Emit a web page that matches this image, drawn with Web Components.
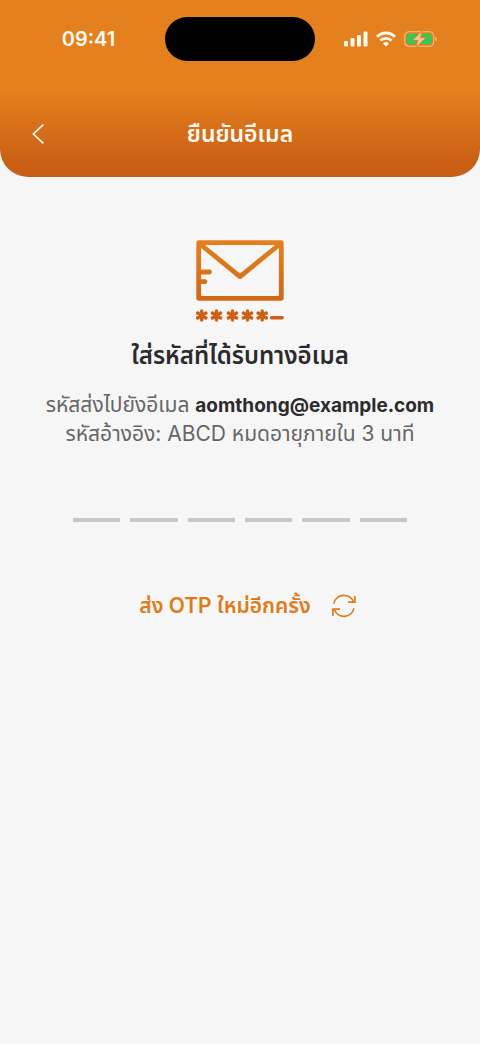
<!DOCTYPE html>
<html lang="th">
<head>
<meta charset="utf-8">
<meta name="viewport" content="width=device-width, initial-scale=1">
<title>ยืนยันอีเมล</title>
<style>
  html, body { margin: 0; min-height: 100%; background: #f6f6f6; }
  body { font-family: Inter, "Noto Sans Thai", "Noto Sans", sans-serif; color: #2b2b2d; }
</style>
</head>
<body>
<verify-page></verify-page>
<script>
const define = (name, html, setup) => {
  const template = document.createElement('template');
  template.innerHTML = html;
  customElements.define(name, class extends HTMLElement {
    constructor() {
      super();
      this.attachShadow({ mode: 'open' }).append(template.content.cloneNode(true));
      if (setup) setup(this.shadowRoot);
    }
  });
};

define('status-bar', `
<style>
  :host { display: grid; grid-template-columns: 1fr 150px 1fr; align-items: center; height: 44px; padding-top: 17px; color: #fffaf0; }
  time { font-size: 20px; font-weight: 600; line-height: 24px; justify-self: center; padding-left: 12px; }
  .island { height: 44px; border-radius: 22px; background: #000; }
  .icons { display: flex; gap: 8px; align-items: center; justify-self: center; padding-right: 14px; }
  svg { display: block; }
</style>
<time>09:41</time>
<div class="island"></div>
<div class="icons">
  <svg width="24" height="16" viewBox="0 0 24 16" fill="currentColor" aria-hidden="true">
    <rect x="0" y="10" width="4" height="5.5" rx="1.2"/><rect x="6.5" y="7" width="4" height="8.5" rx="1.2"/><rect x="13" y="4" width="4" height="11.5" rx="1.2"/><rect x="19.5" y="0.5" width="4" height="15" rx="1.2"/>
  </svg>
  <svg width="20" height="16" viewBox="0 0 20 16" fill="none" stroke="currentColor" stroke-width="2.8" aria-hidden="true">
    <path d="M1 5.8C6 .7 14 .7 19 5.8"/><path d="M4.4 9.6C7.6 6.5 12.4 6.5 15.6 9.6"/><path d="M10 15.6L6.9 12.4Q10 9.8 13.1 12.4Z" fill="currentColor" stroke="none"/>
  </svg>
  <svg width="33" height="18" viewBox="0 0 33 18" aria-hidden="true">
    <rect x=".7" y="1.7" width="29" height="14.6" rx="4.6" fill="none" stroke="#f0b56f" stroke-width="1.3"/>
    <path d="M31.2 6.5Q33 7.3 33 9T31.2 11.5Z" fill="#f0b56f"/>
    <rect x="2.7" y="3.7" width="25" height="10.6" rx="2.8" fill="#34c759"/>
    <path d="M17.8 1.5L9.3 10H14.3L12.6 16.5L21.2 7.9H16.2Z" fill="#f7c18d" stroke="#e5801d" stroke-width="1.6" paint-order="stroke"/>
  </svg>
</div>`);

define('page-header', `
<style>
  :host { display: block; height: 177px; border-radius: 0 0 28px 28px; background: linear-gradient(#e4801e 0, #e4801e 92px, #c95f15 164px, #c95f15 100%); }
  .bar { display: grid; grid-template-columns: 48px 1fr 48px; align-items: center; margin-top: 49px; padding: 0 14px; height: 48px; color: #fffaf0; }
  button { display: grid; place-items: center; width: 48px; height: 48px; margin: 0; padding: 0; border: 0; background: none; color: inherit; }
  h1 { margin: 0; text-align: center; font-size: 23px; line-height: 34px; font-weight: 600; }
</style>
<status-bar></status-bar>
<div class="bar">
  <button type="button" aria-label="ย้อนกลับ"><svg width="14" height="22" viewBox="0 0 14 22" fill="none" stroke="currentColor" stroke-width="1.7" aria-hidden="true"><path d="M12.4 1.6L2.4 11L12.4 20.4"/></svg></button>
  <h1><slot></slot></h1>
</div>`);

define('mail-code-icon', `
<style>:host { display: block; } svg { display: block; margin: 0 auto; }</style>
<svg width="88" height="82" viewBox="0 0 88 82" aria-hidden="true">
  <defs>
    <linearGradient id="g" gradientUnits="userSpaceOnUse" x1="0" y1="0" x2="0" y2="82"><stop offset="0" stop-color="#e4801e"/><stop offset="1" stop-color="#c95f15"/></linearGradient>
    <path id="star" d="M0-4.6V4.6M-4.2-2.5L4.2 2.5M-4.2 2.5L4.2-2.5"/>
  </defs>
  <g fill="none" stroke="url(#g)" stroke-width="4.8" stroke-linecap="round" stroke-linejoin="round">
    <path d="M2.7 2.7H85.3V58.3H2.7ZM4 4L44 36.6L84 4M4 32H13.5M4 41.6H9"/>
  </g>
  <g fill="none" stroke="#ca6115" stroke-width="3.4" stroke-linecap="round">
    <use href="#star" x="5.7" y="75.5"/><use href="#star" x="20.5" y="75.5"/><use href="#star" x="36.5" y="75.5"/><use href="#star" x="51.5" y="75.5"/><use href="#star" x="66.2" y="75.5"/>
    <path d="M75.5 77.8H86.2"/>
  </g>
</svg>`);

define('otp-field', `
<style>
  :host { display: block; }
  fieldset { display: grid; grid-template-columns: repeat(6, 1fr); gap: 10px; min-width: 0; margin: 0; padding: 0; border: 0; }
  input { box-sizing: border-box; width: 100%; min-width: 0; height: 44px; margin: 0; padding: 0; border: 0; border-bottom: 4px solid #c7c7c7; border-radius: 0; background: none; text-align: center; font: inherit; font-size: 24px; color: inherit; outline: 0; }
  input:focus { border-color: #e4801e; }
</style>
<fieldset aria-label="รหัส OTP"></fieldset>`, root => {
  const group = root.querySelector('fieldset');
  for (let i = 1; i <= 6; i++) {
    const input = document.createElement('input');
    input.inputMode = 'numeric';
    input.maxLength = 1;
    input.setAttribute('aria-label', 'หลักที่ ' + i);
    input.addEventListener('input', () => input.value && input.nextElementSibling?.focus());
    group.append(input);
  }
});

define('resend-button', `
<style>
  :host { display: block; text-align: center; }
  button { display: inline-flex; align-items: center; gap: 20px; margin: 0; padding: 0 0 0 16px; border: 0; background: none; color: #dd7c1c; font: inherit; font-size: 21px; line-height: 32px; font-weight: 600; white-space: nowrap; }
  svg { display: block; }
</style>
<button type="button"><span><slot></slot></span>
<svg width="26" height="24" viewBox="0 0 26 24" fill="none" stroke="currentColor" stroke-width="1.7" aria-hidden="true">
  <path d="M2.8 9.6A10.3 10.3 0 0 1 22.6 8.2M17 8.2H23.9V2M23 14.4A10.3 10.3 0 0 1 3.4 15.8M9 15.2H1.9V22"/>
</svg></button>`);

define('verify-page', `
<style>
  :host { display: block; }
  main { padding: 63px 16px 0; text-align: center; }
  h2 { margin: 18px 0 0; font-size: 24px; line-height: 32px; font-weight: 600; }
  p { margin: 18px 0 0; font-size: 21px; line-height: 29px; color: #666; }
  strong { font-size: 19px; line-height: 1; font-weight: 700; color: #2b2b2d; }
  otp-field { margin: 30px 57px 0; }
  resend-button { margin-top: 68px; }
</style>
<page-header>ยืนยันอีเมล</page-header>
<main>
  <mail-code-icon></mail-code-icon>
  <h2>ใส่รหัสที่ได้รับทางอีเมล</h2>
  <p>รหัสส่งไปยังอีเมล <strong>aomthong@example.com</strong><br>รหัสอ้างอิง: ABCD หมดอายุภายใน 3 นาที</p>
  <otp-field></otp-field>
  <resend-button>ส่ง OTP ใหม่อีกครั้ง</resend-button>
</main>`);
</script>
</body>
</html>
